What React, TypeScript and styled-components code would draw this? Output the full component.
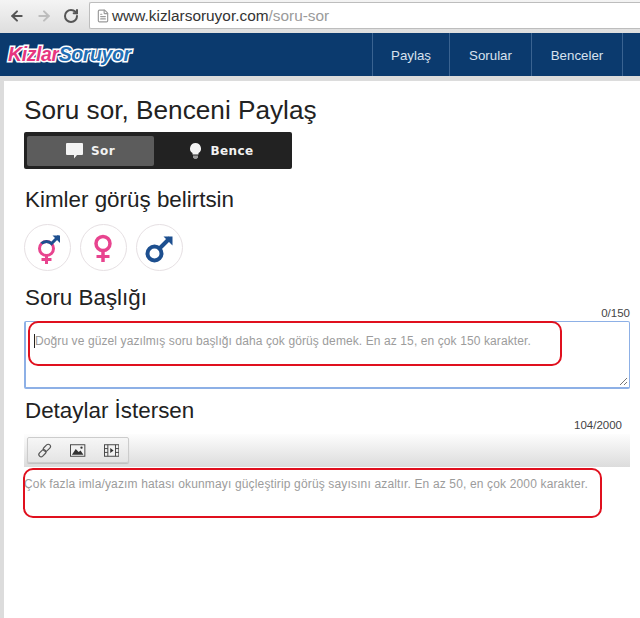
import styled, { createGlobalStyle } from "styled-components";
import { ArrowLeft, ArrowRight, RotateCw, FileText } from "lucide-react";

const Global = createGlobalStyle`
  html, body {
    margin: 0;
    padding: 0;
    background: #fff;
    font-family: "Liberation Sans", Arial, sans-serif;
  }
`;

const Shell = styled.div`
  width: 640px;
  height: 618px;
  overflow: hidden;
  display: flex;
  flex-direction: column;
  background: #dcdcdc;
`;

const BrowserBar = styled.div`
  height: 33px;
  flex: none;
  display: flex;
  align-items: center;
  padding: 0 0 2px 9px;
  box-sizing: border-box;
  background: linear-gradient(#f4f4f4, #dedede);
`;

const BarIcon = styled.span<{ $color: string }>`
  width: 16px;
  height: 16px;
  margin-right: 11px;
  display: flex;
  color: ${(p) => p.$color};
`;

const AddressBox = styled.div`
  flex: 1;
  height: 25px;
  margin-left: -1px;
  display: flex;
  align-items: center;
  gap: 2px;
  padding-left: 6px;
  background: #fff;
  border: 1px solid #bdbdbd;
  border-right: none;
  border-radius: 2px 0 0 2px;
  font-size: 15.4px;
  color: #333;
`;

const UrlPath = styled.span`
  color: #9a9a9a;
`;

const NavBar = styled.div`
  height: 43px;
  flex: none;
  display: flex;
  align-items: center;
  justify-content: space-between;
  background: #0b3a6e;
  padding-left: 8px;
`;

const Logo = styled.div`
  font-size: 19.5px;
  font-weight: 700;
  font-style: italic;
  letter-spacing: -0.4px;
  -webkit-text-stroke: 3px #fff;
  paint-order: stroke fill;
`;

const LogoPart = styled.span<{ $color: string }>`
  color: ${(p) => p.$color};
`;

const NavLinks = styled.div`
  display: flex;
  height: 100%;
`;

const NavLink = styled.div<{ $width: number }>`
  width: ${(p) => p.$width}px;
  display: flex;
  align-items: center;
  justify-content: center;
  padding-top: 1px;
  border-left: 1px solid #3a6391;
  box-sizing: border-box;
  color: #d8e2ee;
  font-size: 13.3px;
`;

const Page = styled.div`
  flex: 1;
  margin: 5px 0 0 4px;
  padding: 14px 10px 0 20px;
  background: #fff;
  display: flex;
  flex-direction: column;
  align-items: flex-start;
`;

const Title = styled.h1`
  margin: 0;
  font-size: 26.200px;
  line-height: 30px;
  font-weight: 400;
  color: #222;
`;

const Toggle = styled.div`
  margin-top: 7px;
  width: 268px;
  height: 37px;
  box-sizing: border-box;
  padding: 4px 3px 3px;
  display: flex;
  background: #222;
  border-radius: 2px;
`;

const ToggleItem = styled.div<{ $active?: boolean }>`
  width: 127px;
  display: flex;
  align-items: center;
  justify-content: center;
  gap: 8px;
  flex: ${(p) => (p.$active ? "none" : 1)};
  background: ${(p) => (p.$active ? "#5c5c5c" : "transparent")};
  border-radius: 2px;
  color: #f2f2f2;
  font-family: "DejaVu Sans", sans-serif;
  font-size: 12px;
  font-weight: 700;
  letter-spacing: 0.4px;
`;

const Section = styled.h2<{ $top: number }>`
  margin: ${(p) => p.$top}px 0 0 1px;
  font-size: 22.4px;
  line-height: 26px;
  font-weight: 400;
  color: #222;
`;

const GenderRow = styled.div`
  margin-top: 11px;
  display: flex;
  gap: 9px;
`;

const GenderButton = styled.div`
  width: 47px;
  height: 47px;
  box-sizing: border-box;
  border: 1px solid #e6e0e3;
  border-radius: 50%;
  display: flex;
  align-items: center;
  justify-content: center;
`;

const Counter = styled.div<{ $inset: number; $top: number }>`
  align-self: flex-end;
  margin: ${(p) => p.$top}px ${(p) => p.$inset}px 0 0;
  font-size: 11.5px;
  line-height: 12px;
  color: #444;
`;

const TitleBox = styled.div`
  position: relative;
  margin-top: 2px;
  width: 606px;
  height: 68px;
  box-sizing: border-box;
  padding: 9px 8px;
  border: 1px solid #8db0e6;
  border-width: 1px 1px 2px 2px;
  border-radius: 2px;
`;

const Caret = styled.span`
  display: inline-block;
  width: 1px;
  height: 14px;
  vertical-align: -3px;
  background: #222;
`;

const Hint = styled.span<{ $spacing: number }>`
  font-size: 12px;
  line-height: 14px;
  letter-spacing: ${(p) => p.$spacing}px;
  color: #9c9c9c;
  white-space: nowrap;
`;

const ResizeGrip = styled.svg`
  position: absolute;
  right: 1px;
  bottom: 1px;
`;

const RedMark = styled.div<{ $left: number; $top: number; $width: number; $height: number }>`
  position: absolute;
  left: ${(p) => p.$left}px;
  top: ${(p) => p.$top}px;
  width: ${(p) => p.$width}px;
  height: ${(p) => p.$height}px;
  box-sizing: border-box;
  border: 2px solid #e0101e;
  border-radius: 10px;
`;

const Toolbar = styled.div`
  margin-top: 3px;
  width: 606px;
  height: 33px;
  box-sizing: border-box;
  padding: 3px;
  background: linear-gradient(#fdfdfd, #dcdcdc);
`;

const ToolGroup = styled.div`
  width: 102px;
  height: 26px;
  box-sizing: border-box;
  display: flex;
  align-items: center;
  gap: 18px;
  padding: 0 9px;
  background: linear-gradient(#f6f6f6, #e4e4e4);
  border: 1px solid #cccccc;
  border-radius: 2px;
  box-shadow: 0 1px 1px rgba(0, 0, 0, 0.15);
`;

const EditorArea = styled.div`
  position: relative;
  width: 606px;
  padding: 7px 0 0 0;
`;

const Sor = () => (
  <svg width="17" height="16" viewBox="0 0 17 16">
    <path d="M1 0h15a1 1 0 0 1 1 1v10a1 1 0 0 1-1 1h-5l-3 3.500v-3.500H1a1 1 0 0 1-1-1V1a1 1 0 0 1 1-1z" fill="#f4f4f4" />
  </svg>
);

const Bulb = () => (
  <svg width="13" height="16" viewBox="0 0 13 16">
    <path d="M6.500 0a5.500 5.500 0 0 1 3 10.100V11.500h-6v-1.400A5.500 5.500 0 0 1 6.500 0z" fill="#f4f4f4" />
    <path d="M4 12.500h5v2l-1.500 1.500h-2L4 14.500z" fill="#999" />
  </svg>
);

// pink ring and stem with the blue arrow on its upper right
const BothIcon = () => (
  <svg width="34" height="34" viewBox="0 0 34 34" fill="none" strokeWidth="3">
    <circle cx="15.500" cy="17.500" r="7" stroke="#e8448f" />
    <path d="M10.500 12.500A7 7 0 0 1 20.500 12.500L28 5" stroke="#1d4f8f" />
    <path d="M21.500 4.500H29V12z" fill="#1d4f8f" />
    <path d="M15.500 24.500V33" stroke="#e8448f" />
    <path d="M10.500 28.500h10" stroke="#e8448f" />
  </svg>
);

const FemaleIcon = () => (
  <svg width="28" height="34" viewBox="0 0 28 34" fill="none" stroke="#e8448f" strokeWidth="3.500">
    <circle cx="13" cy="12.500" r="7" />
    <path d="M13 19.500V31" />
    <path d="M6.500 25.500h13" strokeWidth="3" />
  </svg>
);

const MaleIcon = () => (
  <svg width="34" height="34" viewBox="0 0 34 34" fill="none" stroke="#1d4f8f" strokeWidth="4">
    <circle cx="11.500" cy="22.500" r="7" />
    <path d="M17 17L27 7" />
    <path d="M20.500 5.500H29.500V14.500z" fill="#1d4f8f" stroke="none" />
  </svg>
);

const LinkIcon = () => (
  <svg width="16" height="17" viewBox="0 0 17 17" fill="none" stroke="#555" strokeWidth="1.300">
    <rect x="8.500" y="1" width="5" height="9" rx="2.500" transform="rotate(45 11 5.500)" />
    <rect x="3.500" y="7" width="5" height="9" rx="2.500" transform="rotate(45 6 11.500)" />
  </svg>
);

const ImageIcon = () => (
  <svg width="16" height="13" viewBox="0 0 16 13">
    <rect x="0.500" y="0.500" width="15" height="12" fill="#f2f2f2" stroke="#444" />
    <path d="M2 11 L6 5 L9 8 L11 6.500 L14 11z" fill="#333" />
    <circle cx="12" cy="3.500" r="1.200" fill="#333" />
  </svg>
);

const FilmIcon = () => (
  <svg width="16" height="13" viewBox="0 0 16 13">
    <rect x="0.500" y="0.500" width="15" height="12" fill="#f2f2f2" stroke="#444" />
    <path d="M4 0.500v12 M12 0.500v12 M0.500 4.500H4 M0.500 8.500H4 M12 4.500h3.500 M12 8.500h3.500" stroke="#444" />
    <path d="M6.500 4v5l3.500-2.500z" fill="#333" />
  </svg>
);

export default function App() {
  return (
    <Shell>
      <Global />
      <BrowserBar>
        <BarIcon $color="#555">
          <ArrowLeft size={16} strokeWidth={3} />
        </BarIcon>
        <BarIcon $color="#bdbdbd">
          <ArrowRight size={16} strokeWidth={3} />
        </BarIcon>
        <BarIcon $color="#555">
          <RotateCw size={16} strokeWidth={3} />
        </BarIcon>
        <AddressBox>
          <FileText size={14} color="#9a9a9a" />
          <span>
            www.kizlarsoruyor.com<UrlPath>/soru-sor</UrlPath>
          </span>
        </AddressBox>
      </BrowserBar>

      <NavBar>
        <Logo>
          <LogoPart $color="#e6367f">Kizlar</LogoPart>
          <LogoPart $color="#1f6fb5">Soruyor</LogoPart>
        </Logo>
        <NavLinks>
          <NavLink $width={77}>Paylaş</NavLink>
          <NavLink $width={82}>Sorular</NavLink>
          <NavLink $width={91}>Benceler</NavLink>
          <NavLink $width={18} />
        </NavLinks>
      </NavBar>

      <Page>
        <Title>Soru sor, Benceni Paylaş</Title>
        <Toggle>
          <ToggleItem $active>
            <Sor />
            Sor
          </ToggleItem>
          <ToggleItem>
            <Bulb />
            Bence
          </ToggleItem>
        </Toggle>

        <Section $top={18}>Kimler görüş belirtsin</Section>
        <GenderRow>
          <GenderButton>
            <BothIcon />
          </GenderButton>
          <GenderButton>
            <FemaleIcon />
          </GenderButton>
          <GenderButton>
            <MaleIcon />
          </GenderButton>
        </GenderRow>

        <Section $top={14}>Soru Başlığı</Section>
        <Counter $inset={0} $top={-4}>
          0/150
        </Counter>
        <TitleBox>
          <Caret />
          <Hint $spacing={0.1}>Doğru ve güzel yazılmış soru başlığı daha çok görüş demek. En az 15, en çok 150 karakter.</Hint>
          <RedMark $left={2} $top={-1} $width={534} $height={45} />
          <ResizeGrip width="10" height="10" viewBox="0 0 10 10" stroke="#777">
            <path d="M9 2 L2 9 M9 6 L6 9" />
          </ResizeGrip>
        </TitleBox>

        <Section $top={9}>Detaylar İstersen</Section>
        <Counter $inset={8} $top={-5}>
          104/2000
        </Counter>
        <Toolbar>
          <ToolGroup>
            <LinkIcon />
            <ImageIcon />
            <FilmIcon />
          </ToolGroup>
        </Toolbar>
        <EditorArea>
          <Hint $spacing={0.15}>Çok fazla imla/yazım hatası okunmayı güçleştirip görüş sayısını azaltır. En az 50, en çok 2000 karakter.</Hint>
          <RedMark $left={-1} $top={1} $width={579} $height={50} />
        </EditorArea>
      </Page>
    </Shell>
  );
}
